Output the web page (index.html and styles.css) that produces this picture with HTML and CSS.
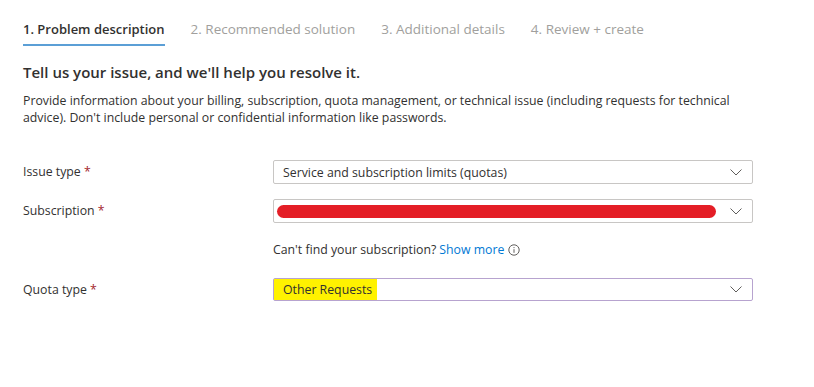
FILE: index.html
```html
<!DOCTYPE html>
<html lang="en">
<head>
    <meta charset="UTF-8">
    <title>New support request</title>
    <link rel="stylesheet" href="styles.css">
</head>
<body>
    <nav class="tabs">
        <span class="tab active">1. Problem description</span>
        <span class="tab">2. Recommended solution</span>
        <span class="tab">3. Additional details</span>
        <span class="tab">4. Review + create</span>
    </nav>

    <h2>Tell us your issue, and we'll help you resolve it.</h2>
    <p class="intro">Provide information about your billing, subscription, quota management, or technical issue (including requests for technical advice). Don't include personal or confidential information like passwords.</p>

    <div class="form">
        <label class="label">Issue type <span class="req">*</span></label>
        <div class="select">
            <span class="value">Service and subscription limits (quotas)</span>
            <svg class="chevron" viewBox="0 0 12 7" width="12" height="7"><path d="M0.5 0.5 L6 6 L11.5 0.5" fill="none" stroke="#605e5c" stroke-width="1"/></svg>
        </div>

        <label class="label">Subscription <span class="req">*</span></label>
        <div class="select">
            <span class="redacted"></span>
            <svg class="chevron" viewBox="0 0 12 7" width="12" height="7"><path d="M0.5 0.5 L6 6 L11.5 0.5" fill="none" stroke="#605e5c" stroke-width="1"/></svg>
        </div>

        <span></span>
        <div class="hint">Can't find your subscription? <a href="#">Show more</a>
            <svg class="info" viewBox="0 0 12 12" width="12" height="12"><circle cx="6" cy="6" r="5.2" fill="none" stroke="#605e5c" stroke-width="1"/><path d="M6 5.2 V8.8" stroke="#605e5c" stroke-width="1"/><circle cx="6" cy="3.6" r="0.6" fill="#605e5c"/></svg>
        </div>

        <label class="label">Quota type <span class="req">*</span></label>
        <div class="select focused">
            <span class="value highlight">Other Requests</span>
            <svg class="chevron" viewBox="0 0 12 7" width="12" height="7"><path d="M0.5 0.5 L6 6 L11.5 0.5" fill="none" stroke="#605e5c" stroke-width="1"/></svg>
        </div>
    </div>
</body>
</html>
```

FILE: styles.css
```css
:root {
    --text: #323130;
    --muted: #a19f9d;
    --border: #c8c6c4;
    --link: #0078d4;
}

* {
    margin: 0;
    padding: 0;
    box-sizing: border-box;
}

body {
    font-family: 'Open Sans', 'Noto Sans', Arial, sans-serif;
    font-size: 12.3px;
    color: var(--text);
    background: #fff;
    padding: 0 23px;
}

.tabs {
    display: flex;
    gap: 26px;
    padding-top: 19px;
}

.tab {
    font-size: 13.5px;
    color: var(--muted);
    padding-bottom: 5px;
    border-bottom: 2px solid transparent;
    line-height: 20px;
}

.tab.active {
    font-size: 13px;
    color: var(--text);
    font-weight: 600;
    border-bottom-color: #5b9fd6;
}

h2 {
    font-size: 15px;
    font-weight: 600;
    margin-top: 16px;
    line-height: 20px;
}

.intro {
    margin-top: 10px;
    line-height: 17px;
    max-width: 720px;
}

.form {
    display: grid;
    grid-template-columns: 250px 480px;
    row-gap: 15px;
    margin-top: 34px;
    align-items: center;
}

.label {
    line-height: 20px;
}

.req {
    color: #a4262c;
}

.select {
    height: 24px;
    border: 1px solid var(--border);
    border-radius: 2px;
    display: flex;
    align-items: center;
}

.select.focused {
    border-color: #b7a3cf;
    height: 23px;
}

.value {
    padding-left: 9px;
    flex: 1;
    line-height: 21px;
}

.value.highlight {
    flex: 0 0 auto;
    background: #fff200;
    padding-right: 5px;
}

.value.highlight + .chevron {
    margin-left: auto;
}

.chevron {
    margin-right: 10px;
    margin-left: 8px;
}

.redacted {
    display: block;
    height: 13px;
    width: 439px;
    margin-left: 3px;
    margin-right: auto;
    background: #e41e26;
    border-radius: 7px;
}

.hint {
    line-height: 20px;
    margin-top: 2px;
    margin-bottom: 3px;
    display: flex;
    align-items: center;
    gap: 3px;
}

.hint a {
    color: var(--link);
    text-decoration: none;
}

.info {
    margin-left: 1px;
}
```
